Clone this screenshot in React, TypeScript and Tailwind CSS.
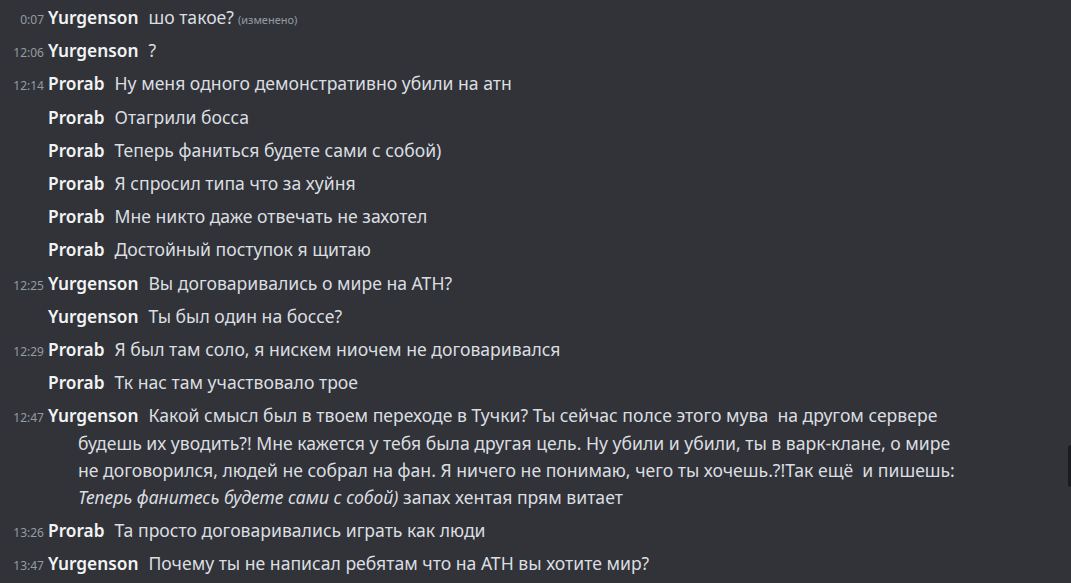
import React from "react";

type Part = { text: string; italic?: boolean; br?: boolean };

interface Message {
  time?: string;
  author: string;
  parts: Part[];
  edited?: boolean;
}

const messages: Message[] = [
  { time: "0:07", author: "Yurgenson", parts: [{ text: "шо такое?" }], edited: true },
  { time: "12:06", author: "Yurgenson", parts: [{ text: "?" }] },
  { time: "12:14", author: "Prorab", parts: [{ text: "Ну меня одного демонстративно убили на атн" }] },
  { author: "Prorab", parts: [{ text: "Отагрили босса" }] },
  { author: "Prorab", parts: [{ text: "Теперь фаниться будете сами с собой)" }] },
  { author: "Prorab", parts: [{ text: "Я спросил типа что за хуйня" }] },
  { author: "Prorab", parts: [{ text: "Мне никто даже отвечать не захотел" }] },
  { author: "Prorab", parts: [{ text: "Достойный поступок я щитаю" }] },
  { time: "12:25", author: "Yurgenson", parts: [{ text: "Вы договаривались о мире на АТН?" }] },
  { author: "Yurgenson", parts: [{ text: "Ты был один на боссе?" }] },
  { time: "12:29", author: "Prorab", parts: [{ text: "Я был там соло, я нискем ниочем не договаривался" }] },
  { author: "Prorab", parts: [{ text: "Тк нас там участвовало трое" }] },
  {
    time: "12:47",
    author: "Yurgenson",
    parts: [
      { text: "Какой смысл был в твоем переходе в Тучки? Ты сейчас полсе этого мува  на другом сервере", br: true },
      { text: "будешь их уводить?! Мне кажется у тебя была другая цель. Ну убили и убили, ты в варк-клане, о мире", br: true },
      { text: "не договорился, людей не собрал на фан. Я ничего не понимаю, чего ты хочешь.?!Так ещё  и пишешь:", br: true },
      { text: "Теперь фанитесь будете сами с собой)", italic: true },
      { text: " запах хентая прям витает" },
    ],
  },
  { time: "13:26", author: "Prorab", parts: [{ text: "Та просто договаривались играть как люди" }] },
  { time: "13:47", author: "Yurgenson", parts: [{ text: "Почему ты не написал ребятам что на АТН вы хотите мир?" }] },
];

const ChatRow = ({ msg }: { msg: Message }) => {
  return (
    <div className="py-[3px] pl-[78px] pr-[40px] -indent-[70px] whitespace-pre-wrap text-[17.6px] leading-[27.2px] text-[#dbdee1]">
      <span className="inline-block w-[36px] mr-[4px] indent-0 text-right text-[12px] leading-none text-[#949ba4]">
        {msg.time ?? ""}
      </span>
      <span className="font-semibold text-[17.3px] leading-none text-[#f2f3f5]">{msg.author}</span>
      <span className="ml-[10px]">
        {msg.parts.map((p, i) => (
          <React.Fragment key={i}>
            <span className={p.italic ? "italic" : ""}>{p.text}</span>
            {p.br && <br />}
          </React.Fragment>
        ))}
        {msg.edited && <span className="ml-[4px] text-[11px] leading-none text-[#949ba4]">(изменено)</span>}
      </span>
    </div>
  );
};

export default function App() {
  return (
    <div
      className="relative h-screen w-full overflow-hidden bg-[#313338]"
      style={{ fontFamily: '"Noto Sans", "Open Sans", sans-serif' }}
    >
      <div className="flex flex-col pt-[1px]">
        {messages.map((m, i) => (
          <ChatRow key={i} msg={m} />
        ))}
      </div>
      <div className="absolute right-0 top-[445px] h-[42px] w-[3px] rounded-l-[3px] bg-[#1a1b1e]" />
    </div>
  );
}
